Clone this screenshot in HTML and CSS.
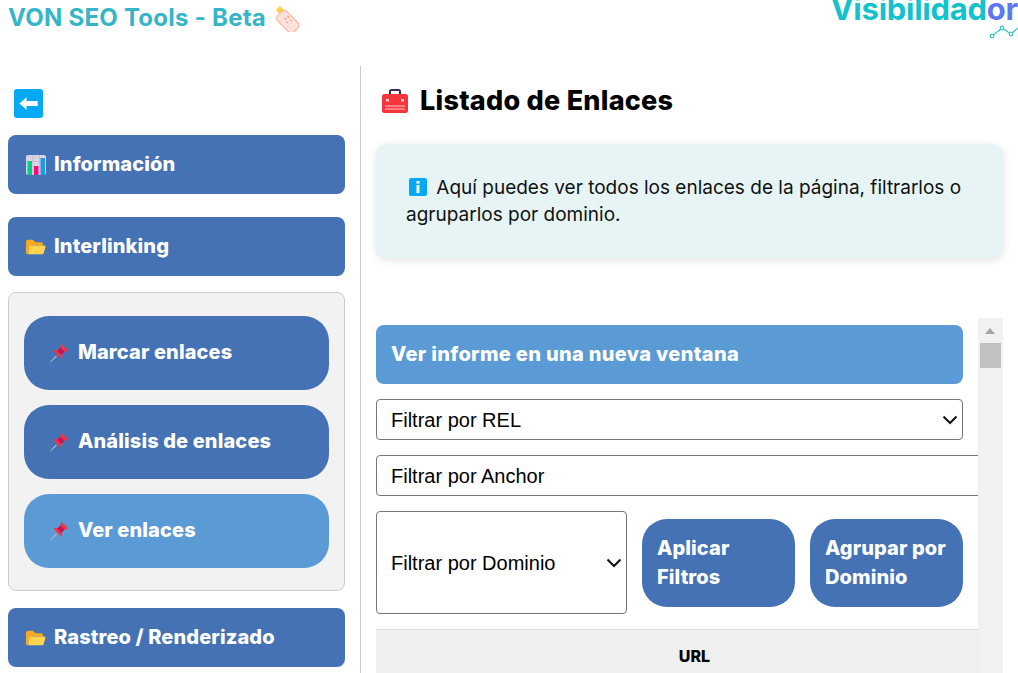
FILE: index.html
```html
<!DOCTYPE html>
<html lang="es">
<head>
<meta charset="utf-8">
<title>VON SEO Tools - Beta</title>
<link rel="stylesheet" href="styles.css">
</head>
<body>
<svg class="defs" width="0" height="0" aria-hidden="true">
  <defs>
    <symbol id="i-folder" viewBox="1 2.500 19 16">
      <path d="M1 5.500C1 4.400 1.700 3.500 3 3.500H7.500L10 6H15.500C16.300 6 17 6.700 17 7.500V9H6L2.500 17.500C1.500 17.500 1 16.800 1 16Z" fill="#f9a825"/>
      <path d="M5 9H18.300C19.200 9 19.700 9.700 19.500 10.500L17.800 16.300C17.600 17.100 17 17.500 16.200 17.500H2.500C2.900 17.300 3 17 3.200 16.500L4.300 10C4.400 9.400 4.600 9 5 9Z" fill="#ffd54f"/>
    </symbol>
    <symbol id="i-pin" viewBox="0 0 20 20">
      <path d="M1 19L7 12.500L8 13.500L1.500 19.500Z" fill="#b5b5b5"/>
      <path d="M12.500 .8L19.200 7.500L17.600 8.500L16.300 7.900L12.800 11.400L13.200 14.200L11.800 15.200L4.800 8.200L5.800 6.800L8.600 7.200L12.100 3.700L11.500 2.400Z" fill="#f43545"/>
      <path d="M11.400 4.400L15.600 8.600L12.100 12.100L7.900 7.900Z" fill="#c2185b"/>
    </symbol>
  </defs>
</svg>

<header class="top">
  <h1 class="brand">VON SEO Tools - Beta
    <svg class="brand-icon" viewBox="0 0 26 26" width="26" height="26" aria-hidden="true">
      <path d="M1 4L5 0L9.500 4.500L5 9Z" fill="#ffd23f"/>
      <rect x="6" y="5" width="23" height="13" rx="4" transform="rotate(45 10 8)" fill="#fde3dc" stroke="#f7b9a8" stroke-width="1.300"/>
      <path d="M9.500 12l1.500 1.500M12.500 10l1.500 1.500M11.500 16l1 1M15.500 14l1 1" stroke="#ee8f7a" stroke-width="1.200"/>
    </svg>
  </h1>
  <div class="logo">
    <div class="logo-word">Visibilidad<span class="logo-accent">or</span></div>
    <svg class="logo-graph" viewBox="0 0 30 14" width="30" height="14" aria-hidden="true">
      <path d="M4 11L14 3L23 9L30 3" fill="none" stroke="#35c5cf" stroke-width="1.200"/>
      <circle cx="4" cy="11" r="1.800" fill="#fff" stroke="#35c5cf" stroke-width="1.200"/>
      <circle cx="14" cy="3" r="1.800" fill="#fff" stroke="#35c5cf" stroke-width="1.200"/>
      <circle cx="23" cy="9" r="1.800" fill="#fff" stroke="#35c5cf" stroke-width="1.200"/>
    </svg>
  </div>
</header>

<div class="layout">
  <aside class="sidebar">
    <button class="back" type="button" aria-label="Volver">
      <svg viewBox="0 0 30 30" width="29" height="29" aria-hidden="true">
        <rect width="30" height="30" rx="3" fill="#03a9f4"/>
        <path d="M5.500 15L13 8.500V12.500H24.500V17.500H13V21.500Z" fill="#fff"/>
      </svg>
    </button>
    <a class="nav" href="#">
      <svg class="nav-icon" viewBox="0 0 20 20" aria-hidden="true">
        <rect width="20" height="20" rx="2" fill="#d9d3e3"/>
        <path d="M0 6.500H20M7 0V20M13.500 0V20" stroke="#b9b2c6" stroke-width=".6"/>
        <rect x="1.500" y="6" width="4.500" height="14" fill="#00d084"/>
        <rect x="8" y="11" width="4.500" height="9" fill="#f50c7d"/>
        <rect x="14.500" y="3" width="4.500" height="17" fill="#1e9be8"/>
      </svg>
      Información
    </a>
    <a class="nav nav-gap" href="#"><svg class="nav-icon" aria-hidden="true"><use href="#i-folder"/></svg> Interlinking</a>
    <nav class="panel">
      <a class="sub" href="#"><svg class="nav-icon" aria-hidden="true"><use href="#i-pin"/></svg> Marcar enlaces</a>
      <a class="sub" href="#"><svg class="nav-icon" aria-hidden="true"><use href="#i-pin"/></svg> Análisis de enlaces</a>
      <a class="sub sub-active" href="#"><svg class="nav-icon" aria-hidden="true"><use href="#i-pin"/></svg> Ver enlaces</a>
    </nav>
    <a class="nav" href="#"><svg class="nav-icon" aria-hidden="true"><use href="#i-folder"/></svg> Rastreo / Renderizado</a>
  </aside>

  <main class="main">
    <h2 class="title">
      <svg class="title-icon" viewBox="0 0 28 26" width="28" height="26" aria-hidden="true">
        <path d="M9 6V3.500C9 2.500 9.700 2 10.500 2H17.500C18.300 2 19 2.500 19 3.500V6" fill="none" stroke="#3c2a5c" stroke-width="2"/>
        <rect x="1" y="6" width="26" height="19" rx="2.500" fill="#f9353c"/>
        <rect x="5" y="11" width="3" height="2.500" fill="#ffc9c9"/>
        <rect x="20" y="11" width="3" height="2.500" fill="#ffc9c9"/>
        <path d="M4 18H24M4 21H24" stroke="#ffc9c9" stroke-width="1"/>
      </svg>
      Listado de Enlaces
    </h2>
    <section class="notice">
      <p class="notice-text">
        <svg class="notice-icon" viewBox="0 0 18 18" width="18" height="18" aria-hidden="true">
          <rect width="18" height="18" rx="2" fill="#03a9f4"/>
          <rect x="7.500" y="3" width="3" height="2.600" fill="#fff"/>
          <rect x="7.500" y="7" width="3" height="8" fill="#fff"/>
        </svg>
        Aquí puedes ver todos los enlaces de la página, filtrarlos o agruparlos por dominio.
      </p>
    </section>
    <section class="scroller">
      <div class="scroll-content">
        <a class="report" href="#">Ver informe en una nueva ventana</a>
        <select class="field field-select"><option>Filtrar por REL</option></select>
        <input class="field field-input" type="text" value="Filtrar por Anchor">
        <div class="filters">
          <select class="field field-select field-domain"><option>Filtrar por Dominio</option></select>
          <button class="action" type="button">Aplicar Filtros</button>
          <button class="action" type="button">Agrupar por Dominio</button>
        </div>
        <table class="links">
          <thead><tr><th>URL</th></tr></thead>
        </table>
      </div>
      <div class="scrollbar" aria-hidden="true">
        <span class="scroll-up"></span>
        <span class="scroll-thumb"></span>
      </div>
    </section>
  </main>
</div>
</body>
</html>
```

FILE: styles.css
```css
* { box-sizing: border-box; }
html, body { height: 100%; }
body {
  margin: 0;
  overflow: hidden;
  background: #fff;
  color: #000;
  font-family: "Inter", "Liberation Sans", sans-serif;
}
.defs { position: absolute; }
a { text-decoration: none; }

.top {
  display: flex;
  justify-content: space-between;
  align-items: flex-start;
  height: 66px;
  padding-left: 8px;
  overflow: hidden;
}
.brand {
  display: flex;
  align-items: center;
  gap: 9px;
  margin: 3px 0 0;
  font-size: 24px;
  line-height: 29px;
  font-weight: 700;
  letter-spacing: .25px;
  color: #36b5c9;
}
.brand-icon { margin-top: 2px; }
.logo {
  display: flex;
  flex-direction: column;
  align-items: flex-end;
  margin-top: -9px;
}
.logo-word {
  font-size: 31px;
  line-height: 36px;
  font-weight: 700;
  letter-spacing: -.25px;
  color: #12c2cc;
}
.logo-accent { color: #5f78f0; }
.logo-graph { margin-top: -2px; }

.layout { display: flex; height: 607px; }

.sidebar {
  flex: 0 0 361px;
  padding: 23px 15px 0 8px;
  border-right: 1px solid #ccc;
}
.back {
  display: block;
  margin: 0 0 17px 6px;
  padding: 0;
  width: 29px;
  height: 29px;
  border: 0;
  background: none;
}
.back svg { display: block; }

.nav, .sub {
  display: flex;
  align-items: center;
  gap: 8px;
  padding-bottom: 2px;
  color: #fff;
  font-weight: 800;
  font-size: 20px;
  letter-spacing: .12px;
}
.nav-icon { flex: none; width: 20px; height: 20px; margin-top: 2px; }
.nav {
  height: 59px;
  padding-left: 18px;
  border-radius: 8px;
  background: #4472b4;
}
.nav-gap { margin-top: 23px; }

.panel {
  display: flex;
  flex-direction: column;
  gap: 15px;
  margin: 16px 0 17px;
  padding: 23px 15px;
  height: 299px;
  border: 1px solid #ccc;
  border-radius: 8px;
  background: #f2f2f2;
}
.sub {
  flex: 0 0 74px;
  gap: 9px;
  padding-left: 25px;
  border-radius: 25px;
  background: #4472b4;
}
.sub-active { background: #5b9bd5; }

.main { flex: 1; min-width: 0; padding: 0 15px; }

.title {
  display: flex;
  align-items: center;
  gap: 11px;
  margin: 19px 0 27px 5px;
  height: 32px;
  font-size: 27px;
  line-height: 32px;
  font-weight: 800;
  letter-spacing: .25px;
}
.title-icon { flex: none; }

.notice {
  height: 114px;
  padding: 30px;
  border-radius: 12px;
  background: #e6f4f5;
  box-shadow: 0 2px 8px rgba(0, 0, 0, .12);
}
.notice-text {
  margin: 0;
  font-size: 19px;
  line-height: 27px;
  color: #111;
}
.notice-icon {
  margin: 0 4px -2px 3px;
}

.scroller {
  display: flex;
  height: 355px;
  margin-top: 60px;
  overflow: hidden;
}
.scroll-content {
  flex: 0 0 602px;
  padding-top: 7px;
  overflow: hidden;
}
.report {
  display: flex;
  align-items: center;
  width: 587px;
  height: 59px;
  padding: 0 0 2px 15px;
  border-radius: 8px;
  background: #5b9bd5;
  color: #fff;
  font-size: 20px;
  font-weight: 800;
  letter-spacing: .33px;
}
.field {
  display: block;
  width: 587px;
  height: 41px;
  margin-top: 15px;
  padding: 0 14px;
  border: 1px solid #767676;
  border-radius: 4px;
  background: #fff;
  color: #000;
  font-family: "Liberation Sans", Arial, sans-serif;
  font-size: 20px;
}
.field-select {
  appearance: none;
  background-image: url("data:image/svg+xml,%3Csvg xmlns='http://www.w3.org/2000/svg' width='16' height='10' viewBox='0 0 16 10'%3E%3Cpath d='M1.500 1.500L8 8L14.500 1.500' fill='none' stroke='%23111' stroke-width='2'/%3E%3C/svg%3E");
  background-repeat: no-repeat;
  background-position: right 4.500px center;
}
.field-input {
  width: 640px;
  padding-top: 2px;
  border-radius: 4px 0 0 4px;
}
.filters {
  display: flex;
  align-items: center;
  gap: 15px;
  width: 587px;
  margin-top: 15px;
}
.field-domain {
  flex: 0 0 251px;
  width: 251px;
  height: 103px;
  margin: 0;
}
.action {
  flex: 1;
  height: 88px;
  padding: 0 13px 0 15px;
  border: 0;
  border-radius: 25px;
  background: #4472b4;
  color: #fff;
  font-family: "Inter", "Liberation Sans", sans-serif;
  font-size: 20px;
  font-weight: 800;
  line-height: 29px;
  letter-spacing: .1px;
  text-align: left;
}
.links {
  width: 637px;
  margin-top: 15px;
  border-collapse: collapse;
}
.links th {
  height: 52px;
  border-top: 1px solid #ddd;
  background: #f0f0f0;
  font-size: 16px;
  font-weight: 800;
}

.scrollbar {
  position: relative;
  flex: 0 0 25px;
  background: #f1f1f1;
}
.scroll-up {
  position: absolute;
  top: 10px;
  left: 7px;
  border: 5.500px solid transparent;
  border-top: 0;
  border-bottom: 6px solid #a3a3a3;
}
.scroll-thumb {
  position: absolute;
  top: 25px;
  left: 2px;
  width: 21px;
  height: 25px;
  background: #c1c1c1;
}
```
